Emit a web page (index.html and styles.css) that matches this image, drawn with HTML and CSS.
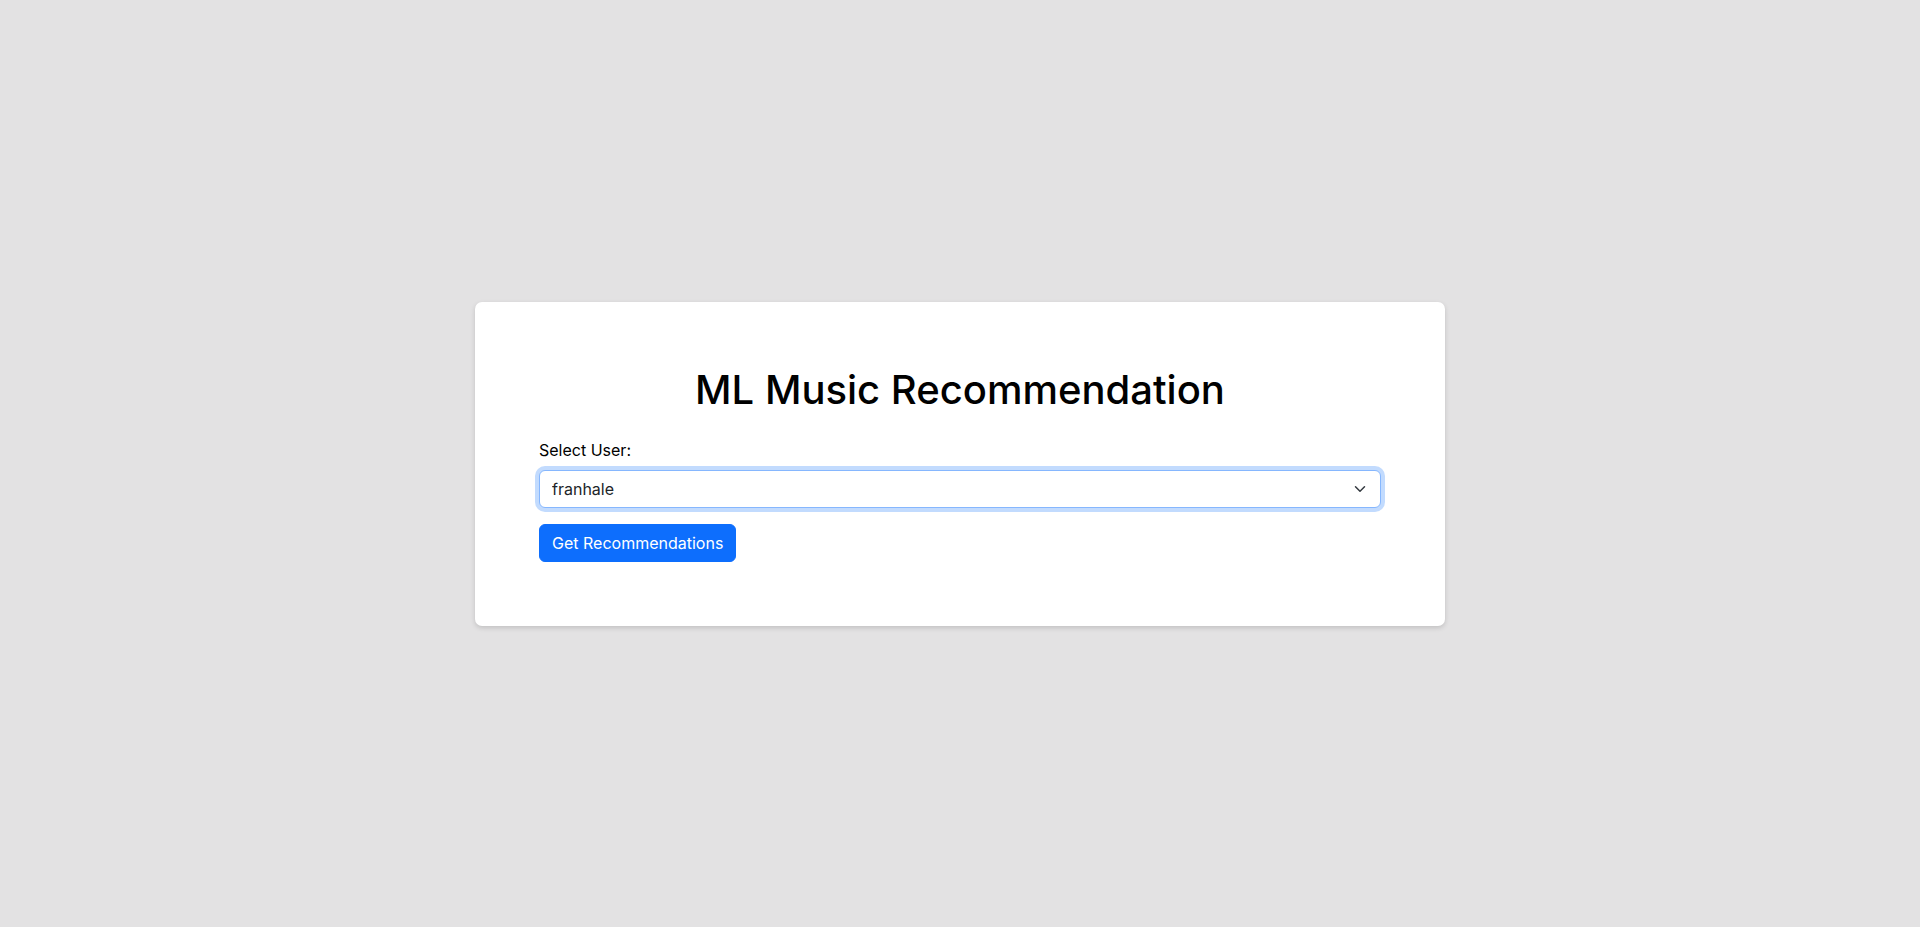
FILE: index.html
```html
<!DOCTYPE html>
<html>
<head>
  <title>ML Music Recommendation</title>
  <link rel="stylesheet" href="styles.css">
</head>
<body>
  <div class="page">
    <div class="card">
      <h1>ML Music Recommendation</h1>
      <form id="userForm">
        <div class="form-group">
          <label for="userSelect">Select User:</label>
          <div class="select-wrap">
            <select id="userSelect" class="form-select">
              <option>franhale</option>
            </select>
            <svg class="chevron" viewBox="0 0 16 16" width="12" height="12">
              <path d="m2 5 6 6 6-6" fill="none" stroke="#343a40" stroke-width="2" stroke-linecap="round" stroke-linejoin="round"/>
            </svg>
          </div>
        </div>
        <button type="submit" class="btn-primary">Get Recommendations</button>
      </form>
    </div>
  </div>
</body>
</html>
```

FILE: styles.css
```css
* {
  box-sizing: border-box;
}

body {
  font-family: Inter, "Noto Sans", sans-serif;
  font-size: 16px;
  line-height: 1.5;
  color: #212529;
  background-color: #e3e2e3;
  margin: 0;
}

.page {
  min-height: 100vh;
  display: flex;
  align-items: center;
  justify-content: center;
}

.card {
  width: 970px;
  padding: 64px;
  background-color: #fff;
  border-radius: 7px;
  box-shadow: 0 2px 5px rgba(0, 0, 0, 0.15);
}

h1 {
  text-align: center;
  font-size: 40px;
  font-weight: 500;
  line-height: 1.2;
  color: #000;
  margin: 0 0 24px;
}

.form-group {
  margin-bottom: 16px;
}

label {
  display: block;
  margin-bottom: 8px;
  color: #000;
}

.select-wrap {
  position: relative;
}

.form-select {
  display: block;
  width: 100%;
  height: 38px;
  padding: 6px 36px 6px 12px;
  font-family: inherit;
  font-size: 16px;
  color: #212529;
  background-color: #fff;
  border: 1px solid #86b7fe;
  border-radius: 6px;
  outline: none;
  box-shadow: 0 0 0 4px rgba(13, 110, 253, 0.25);
  appearance: none;
  -webkit-appearance: none;
}

.chevron {
  position: absolute;
  right: 15px;
  top: 13px;
  pointer-events: none;
}

.btn-primary {
  font-family: inherit;
  font-size: 16px;
  line-height: 1.5;
  color: #fff;
  background-color: #0d6efd;
  border: 1px solid #0d6efd;
  border-radius: 6px;
  padding: 6px 12px;
  cursor: pointer;
}
```
